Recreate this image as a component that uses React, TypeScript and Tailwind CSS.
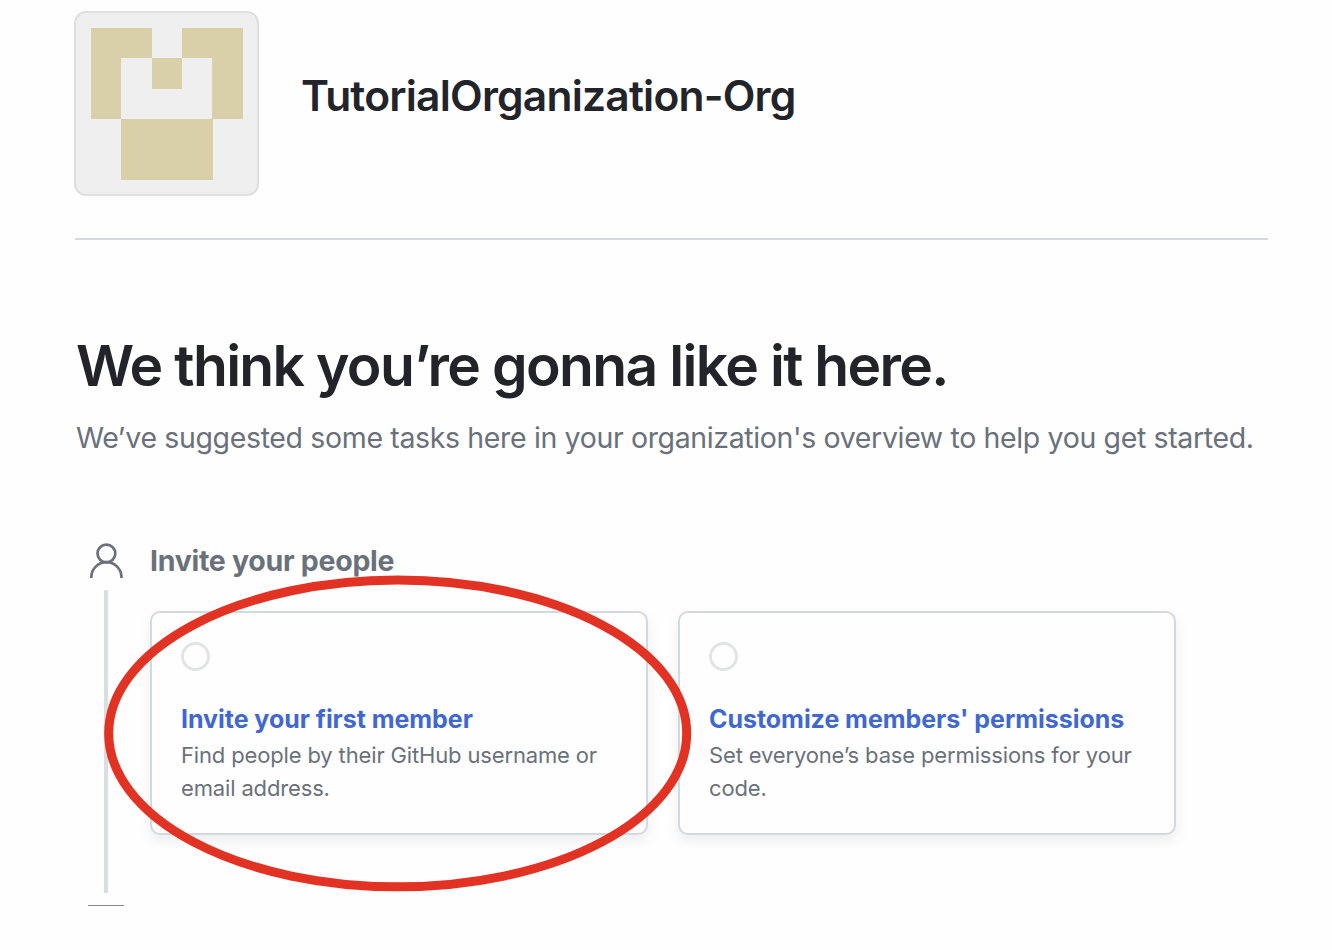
const avatarCells = [
  [0, 0], [1, 0], [3, 0], [4, 0],
  [0, 1], [2, 1], [4, 1],
  [0, 2], [4, 2],
  [1, 3], [2, 3], [3, 3],
  [1, 4], [2, 4], [3, 4],
];

function Avatar() {
  return (
    <div className="h-[185px] w-[185px] shrink-0 overflow-hidden rounded-[12px] border-2 border-[#dfdfdf] bg-[#efefef]">
      <svg className="block h-full w-full" viewBox="0 0 181 181" shapeRendering="crispEdges">
        {avatarCells.map(([x, y]) => (
          <rect key={`${x}-${y}`} x={14.8 + x * 30.4} y={14.9 + y * 30.4} width="30.5" height="30.5" fill="#d9cfa8" />
        ))}
      </svg>
    </div>
  );
}

function PersonIcon() {
  return (
    <svg className="block h-[36px] w-[36px]" viewBox="0 0 36 36" fill="none" stroke="#6a717a" strokeWidth="2.7">
      <circle cx="18.4" cy="10.5" r="8.9" />
      <path d="M3.3 35.1v-.8a15.1 15.1 0 0 1 30.2 0v.8" />
    </svg>
  );
}

function TaskCard({ title, lines }: { title: string; lines: string[] }) {
  return (
    <div className="h-[224px] w-[498px] shrink-0 rounded-[10px] border-2 border-[#d3d9df] bg-[#fefefe] px-[29px] pt-[29px] shadow-[0_6px_12px_rgba(140,149,159,0.15)]">
      <div className="h-[29px] w-[29px] rounded-full border-3 border-[#e1e4e3]" />
      <h3 className="mt-[32px] h-[36px] whitespace-nowrap text-[25px] font-bold leading-[33px] tracking-[-0.04px] text-[#4068d0]">{title}</h3>
      {lines.map((line) => (
        <p key={line} className="whitespace-nowrap text-[22px] leading-[33px] tracking-[-0.15px] text-[#6a717a]">{line}</p>
      ))}
    </div>
  );
}

export default function App() {
  return (
    <main className="relative flex h-[950px] w-[1332px] flex-col overflow-hidden bg-[#fefefe] pl-[74px] pt-[11px] font-['Inter','Liberation_Sans',sans-serif]">
      <header className="flex h-[185px] items-start">
        <Avatar />
        <h1 className="ml-[42px] mt-[58px] whitespace-nowrap text-[42.5px] font-semibold leading-[54px] tracking-[-0.79px] text-[#22242a]">TutorialOrganization-Org</h1>
      </header>
      <hr className="ml-[1px] mt-[42px] w-[1193px] border-0 border-t-2 border-[#d6dade]" />
      <h2 className="ml-[2px] mt-[90px] h-[70px] whitespace-nowrap text-[57px] font-semibold leading-[71px] tracking-[-1.67px] text-[#22242a]">We think you’re gonna like it here.</h2>
      <p className="ml-[2px] mt-[18px] h-[40px] whitespace-nowrap text-[28.5px] leading-[40px] tracking-[-0.36px] text-[#6a717a]">We’ve suggested some tasks here in your organization's overview to help you get started.</p>
      <section className="mt-[85px] flex">
        <div className="flex w-[76px] flex-col pl-[14px]">
          <PersonIcon />
          <div className="ml-[16px] mt-[11px] h-[303px] w-[4px] bg-[#d9dee2]" />
          <div className="mt-[12px] h-px w-[36px] bg-[#85888c]" />
        </div>
        <div>
          <h2 className="h-[68px] whitespace-nowrap text-[28.5px] font-bold leading-[36px] tracking-[-0.28px] text-[#6a717a]">Invite your people</h2>
          <div className="flex gap-[30px]">
            <TaskCard title="Invite your first member" lines={["Find people by their GitHub username or", "email address."]} />
            <TaskCard title="Customize members' permissions" lines={["Set everyone’s base permissions for your", "code."]} />
          </div>
        </div>
      </section>
      <svg className="pointer-events-none absolute left-[104px] top-[575px] h-[317px] w-[588px]" viewBox="0 0 588 317" fill="none">
        <ellipse cx="293.7" cy="158.4" rx="289" ry="153.4" stroke="#e23223" strokeWidth="9" />
      </svg>
    </main>
  );
}
